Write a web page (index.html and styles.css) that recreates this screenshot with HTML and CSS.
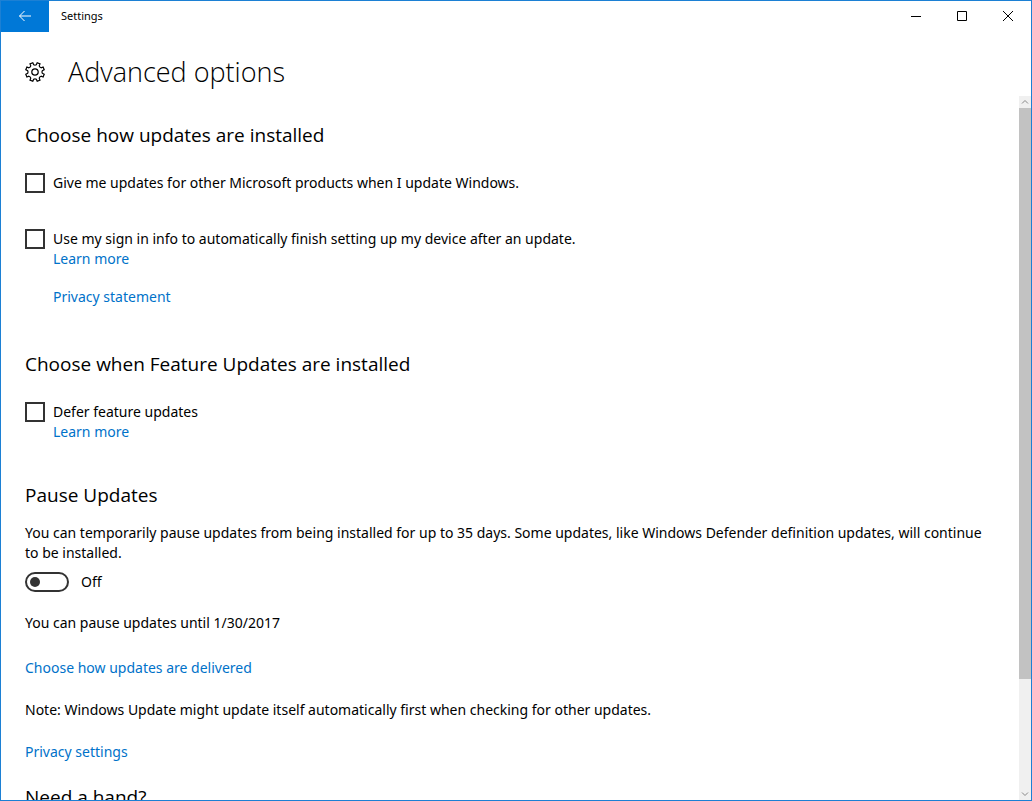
FILE: index.html
```html
<!DOCTYPE html>
<html lang="en">
<head>
    <meta charset="UTF-8">
    <meta name="viewport" content="width=device-width, initial-scale=1.0">
    <title>Settings</title>
    <link rel="stylesheet" href="styles.css">
</head>
<body>
    <div class="window">
        <div class="titlebar">
            <button class="back" aria-label="Back">
                <svg width="14" height="12" viewBox="0 0 14 12"><path d="M13 6H1.500M6.500 1L1.500 6L6.500 11"/></svg>
            </button>
            <span class="app-name">Settings</span>
            <button class="caption" aria-label="Minimize">
                <svg width="10" height="10" viewBox="0 0 10 10"><path d="M0 5.500H10"/></svg>
            </button>
            <button class="caption" aria-label="Maximize">
                <svg width="10" height="10" viewBox="0 0 10 10"><path d="M.5 .5H9.500V9.500H.5Z"/></svg>
            </button>
            <button class="caption" aria-label="Close">
                <svg width="10" height="10" viewBox="0 0 10 10"><path d="M0 0L10 10M10 0L0 10"/></svg>
            </button>
        </div>

        <header class="page-header">
            <svg class="gear" width="20" height="20" viewBox="-10 -10 20 20">
                <path d="M7.300 1.300L9.200 2.200L8.100 5L6.100 4.200Q4.700 4.700 4.200 6.100L5 8.100L2.200 9.200L1.300 7.300Q0 6.600 -1.300 7.300L-2.200 9.200L-5 8.100L-4.200 6.100Q-4.700 4.700 -6.100 4.200L-8.100 5L-9.200 2.200L-7.300 1.300Q-6.600 0 -7.300 -1.300L-9.200 -2.200L-8.100 -5L-6.100 -4.200Q-4.700 -4.700 -4.200 -6.100L-5 -8.100L-2.200 -9.200L-1.300 -7.300Q0 -6.600 1.300 -7.300L2.200 -9.200L5 -8.100L4.200 -6.100Q4.700 -4.700 6.100 -4.200L8.100 -5L9.200 -2.200L7.300 -1.300Q6.600 0 7.300 1.300Z"/>
                <circle r="3.200"/>
            </svg>
            <h1>Advanced options</h1>
        </header>

        <div class="viewport">
            <main class="content">
                <section>
                    <h2>Choose how updates are installed</h2>
                    <div class="option">
                        <input type="checkbox" id="other-products">
                        <label for="other-products">Give me updates for other Microsoft products when I update Windows.</label>
                    </div>
                    <div class="option">
                        <input type="checkbox" id="sign-in-info">
                        <div class="option-text">
                            <label for="sign-in-info">Use my sign in info to automatically finish setting up my device after an update.</label>
                            <a href="#">Learn more</a>
                            <a href="#" class="statement">Privacy statement</a>
                        </div>
                    </div>
                </section>

                <section class="feature">
                    <h2>Choose when Feature Updates are installed</h2>
                    <div class="option">
                        <input type="checkbox" id="defer">
                        <div class="option-text">
                            <label for="defer">Defer feature updates</label>
                            <a href="#">Learn more</a>
                        </div>
                    </div>
                </section>

                <section class="pause">
                    <h2>Pause Updates</h2>
                    <p>You can temporarily pause updates from being installed for up to 35 days. Some updates, like Windows Defender definition updates, will continue to be installed.</p>
                    <div class="toggle">
                        <input type="checkbox" role="switch" id="pause">
                        <label for="pause">Off</label>
                    </div>
                    <p>You can pause updates until 1/30/2017</p>
                </section>

                <div class="notes">
                    <a href="#">Choose how updates are delivered</a>
                    <p>Note: Windows Update might update itself automatically first when checking for other updates.</p>
                    <a href="#">Privacy settings</a>
                </div>

                <h2>Need a hand?</h2>
            </main>

            <div class="scrollbar">
                <button aria-label="Scroll up">
                    <svg width="8" height="6" viewBox="0 0 8 6"><path d="M1 4.500L4 1.500L7 4.500"/></svg>
                </button>
                <div class="thumb"></div>
                <div class="track"></div>
                <button aria-label="Scroll down">
                    <svg width="8" height="6" viewBox="0 0 8 6"><path d="M1 1.500L4 4.500L7 1.500"/></svg>
                </button>
            </div>
        </div>
    </div>
</body>
</html>
```
FILE: styles.css
```css
* {
    box-sizing: border-box;
}
body {
    margin: 0;
    font-family: "Noto Sans", "Open Sans", sans-serif;
    font-size: 14px;
    line-height: 20px;
    color: #000;
    background-color: #fff;
}
h1, h2, p {
    margin: 0;
}
h1, h2 {
    font-family: "Open Sans", "Noto Sans", sans-serif;
}
h1 {
    font-size: 27px;
    font-weight: 300;
    line-height: 36px;
}
h2 {
    font-size: 19px;
    font-weight: 400;
    line-height: 28px;
}
a {
    color: #0072c9;
    text-decoration: none;
}
button {
    display: flex;
    align-items: center;
    justify-content: center;
    padding: 0;
    border: 0;
    background: none;
}
svg {
    fill: none;
    stroke: #000;
}
.window {
    display: flex;
    flex-direction: column;
    height: 100vh;
    border: 1px solid #1c80d4;
    overflow: hidden;
}

/* title bar */
.titlebar {
    display: flex;
    flex: none;
    height: 31px;
}
.titlebar button {
    padding-bottom: 1px;
}
.back {
    width: 48px;
    background-color: #0078d7;
}
.back svg {
    stroke: #fff;
}
.app-name {
    flex: 1;
    padding: 5px 12px;
    font-size: 11px;
}
.caption {
    width: 46px;
}
.page-header {
    display: flex;
    flex: none;
    align-items: center;
    gap: 23px;
    height: 64px;
    padding: 16px 24px 0;
}
.gear {
    stroke-width: 1.2;
}

/* scrolling area */
.viewport {
    display: flex;
    flex: 1;
    min-height: 0;
}
.content {
    flex: 1;
    padding: 25px 28px 0 24px;
    overflow: hidden;
}
section {
    margin-bottom: 43px;
}
.option {
    display: flex;
    gap: 8px;
    margin-top: 24px;
}
.option + .option {
    margin-top: 36px;
}
.option input {
    flex: none;
    appearance: none;
    width: 20px;
    height: 20px;
    margin: 0;
    border: 2px solid #333;
}
.option input:checked {
    background-color: #0078d7;
}
.option-text {
    display: flex;
    flex-direction: column;
    align-items: flex-start;
}
.statement {
    margin-top: 18px;
}
.feature {
    margin-bottom: 39px;
}
.pause {
    margin-bottom: 25px;
}
.pause h2 {
    margin-bottom: 14px;
}
.toggle {
    display: flex;
    gap: 12px;
    margin: 9px 0 21px;
}
.toggle input {
    appearance: none;
    display: flex;
    align-items: center;
    width: 44px;
    height: 20px;
    margin: 0;
    padding: 0 3px;
    border: 2px solid #333;
    border-radius: 10px;
}
.toggle input::before {
    content: "";
    width: 10px;
    height: 10px;
    border-radius: 50%;
    background-color: #333;
}
.toggle input:checked {
    justify-content: flex-end;
}
.notes {
    display: flex;
    flex-direction: column;
    align-items: flex-start;
    gap: 22px;
    margin-bottom: 21px;
}
.scrollbar {
    display: flex;
    flex: none;
    flex-direction: column;
    width: 12px;
    background-color: #f0f0f0;
}
.scrollbar button {
    height: 12px;
}
.scrollbar svg {
    stroke: #888;
}
.thumb {
    flex: 571;
    background-color: #c2c2c2;
}
.track {
    flex: 109;
}
```
